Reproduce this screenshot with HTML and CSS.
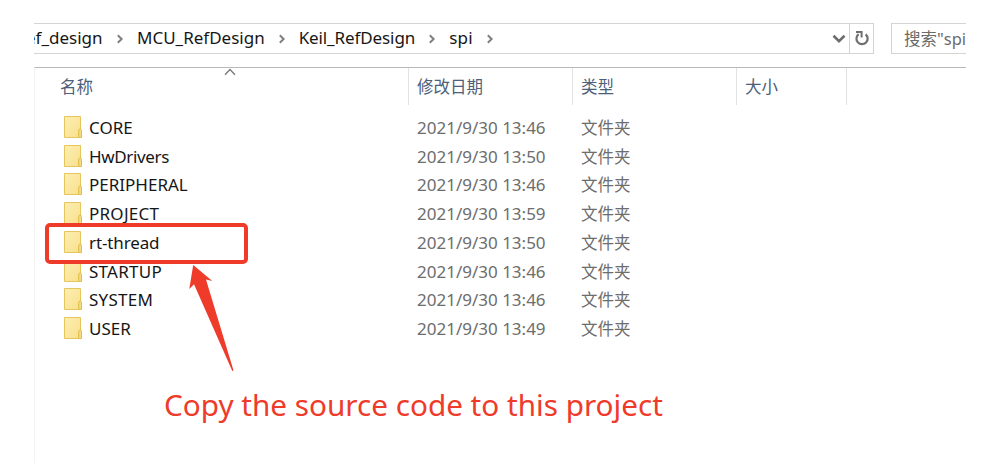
FILE: index.html
```html
<!DOCTYPE html>
<html lang="zh-CN">
<head>
<meta charset="utf-8">
<title>spi</title>
<link rel="stylesheet" href="styles.css">
</head>
<body>
<svg class="defs" width="0" height="0">
  <defs>
    <linearGradient id="paper" x1="0" y1="0" x2="1" y2="1"><stop offset="0" stop-color="#fdeeb2"/><stop offset="1" stop-color="#f8e08c"/></linearGradient>
    <symbol id="folder" viewBox="0 0 18 22">
      <path d="M.5.5h16v13.2l-1.5 1.1v6.7H.5z" fill="url(#paper)" stroke="#e4c65c"/>
      <path d="M14.7 21.5v-7q0-1.5 1.4-1.5t1.4 1.5v7z" fill="#f6dc80" stroke="#dfbd4c"/>
    </symbol>
    <symbol id="chevron" viewBox="0 0 8 10"><path d="M1.8 1.3 5.6 5 1.8 8.7" fill="none" stroke="#808080" stroke-width="2"/></symbol>
  </defs>
</svg>
<main class="window">
  <header class="toolbar">
    <nav class="address">
      <span class="crumb first">ef_design</span>
      <svg class="sep"><use href="#chevron"/></svg>
      <span class="crumb">MCU_RefDesign</span>
      <svg class="sep"><use href="#chevron"/></svg>
      <span class="crumb keil">Keil_RefDesign</span>
      <svg class="sep"><use href="#chevron"/></svg>
      <span class="crumb spi">spi</span>
      <svg class="sep"><use href="#chevron"/></svg>
      <svg class="drop" viewBox="0 0 14 10"><path d="M1.5 1.8 7 7.2l5.5-5.4" fill="none" stroke="#6c6c6c" stroke-width="2.6"/></svg>
      <span class="refresh"><svg width="16" height="17" viewBox="0 0 16 17"><path d="M4.6 4.2A5.6 5.6 0 1 0 11.6 4.3" fill="none" stroke="#707070" stroke-width="2.2"/><path d="M2 2h5.6v5.6" fill="none" stroke="#707070" stroke-width="2"/></svg></span>
    </nav>
    <div class="search">搜索"spi"</div>
  </header>
  <section class="files">
    <div class="head">
      <span>名称<svg class="sort" viewBox="0 0 12 8"><path d="M1 6.7 6 1.5l5 5.2" fill="none" stroke="#777" stroke-width="1.3"/></svg></span><span>修改日期</span><span>类型</span><span>大小</span>
    </div>
    <ul class="rows">
      <li><span class="name"><svg><use href="#folder"/></svg>CORE</span><span>2021/9/30 13:46</span><span class="type">文件夹</span></li>
      <li><span class="name tighter"><svg><use href="#folder"/></svg>HwDrivers</span><span>2021/9/30 13:50</span><span class="type">文件夹</span></li>
      <li><span class="name"><svg><use href="#folder"/></svg>PERIPHERAL</span><span>2021/9/30 13:46</span><span class="type">文件夹</span></li>
      <li><span class="name loose"><svg><use href="#folder"/></svg>PROJECT</span><span>2021/9/30 13:59</span><span class="type">文件夹</span></li>
      <li><span class="name tight"><svg><use href="#folder"/></svg>rt-thread</span><span>2021/9/30 13:50</span><span class="type">文件夹</span></li>
      <li><span class="name loose"><svg><use href="#folder"/></svg>STARTUP</span><span>2021/9/30 13:46</span><span class="type">文件夹</span></li>
      <li><span class="name loose"><svg><use href="#folder"/></svg>SYSTEM</span><span>2021/9/30 13:46</span><span class="type">文件夹</span></li>
      <li><span class="name"><svg><use href="#folder"/></svg>USER</span><span>2021/9/30 13:49</span><span class="type">文件夹</span></li>
    </ul>
  </section>
</main>
<div class="highlight"></div>
<svg class="arrow" viewBox="0 0 46 108"><path d="M5.2 1 24.3 17 18 15.6 45.5 106.5 44.3 107 6 20.3 1.3 25z" fill="#ee3b2a"/></svg>
<p class="note">Copy the source code to this project</p>
</body>
</html>
```
FILE: styles.css
```css
* { box-sizing: border-box; }
body {
  margin: 0;
  width: 998px;
  height: 470px;
  overflow: hidden;
  background: #fff;
  color: #161616;
  font: 17px/24px "Noto Sans", "Noto Sans CJK SC", sans-serif;
}
.defs { position: absolute; }
.window { width: 932px; margin-left: 34px; padding-top: 23px; overflow: hidden; }
.toolbar { display: flex; height: 31px; }
.address {
  display: flex;
  flex: none;
  align-items: center;
  width: 840px;
  border: 1px solid #d4d4d4;
  border-left: 0;
  overflow: hidden;
}
.crumb { white-space: nowrap; margin-top: -2px; }
.first { margin-left: -8px; width: 77px; }
.sep { width: 8px; height: 10px; flex: none; margin: 1px 13px 0 13px; }
.keil { letter-spacing: -0.1px; }
.spi { letter-spacing: 0.3px; }
.drop { width: 14px; height: 10px; margin: 1px 3px 0 auto; }
.refresh { display: flex; align-items: center; justify-content: center; width: 24px; height: 100%; border-left: 1px solid #d4d4d4; }
.search {
  width: 100px;
  flex: none;
  margin-left: 17px;
  padding: 3px 0 0 12px;
  border: 1px solid #d4d4d4;
  color: #6b6b6b;
  white-space: nowrap;
  font-size: 16.5px;
}
.files { margin-top: 13px; height: 396px; border-top: 1.5px solid #b9b9b9; border-left: 1px solid #f3f3f3; }
.head { display: grid; grid-template-columns: 374px 164px 164px 110px; height: 37px; color: #4c607a; font-size: 16.5px; }
.head span { position: relative; border-right: 1px solid #e2e2e2; padding: 7px 0 0 8px; }
.head span:first-child { padding-left: 25px; }
.sort { position: absolute; left: 189px; top: 0; width: 12px; height: 8px; }
.rows { list-style: none; margin: 8.6px 0 0; padding: 0; }
.rows li { display: grid; grid-template-columns: 382px 164px 164px; align-items: center; height: 28.72px; color: #6d6d6d; }
.name { display: flex; align-items: center; color: #161616; }
.name svg { width: 18px; height: 22px; margin: -2px 7px 0 29px; }
.tight { letter-spacing: -0.12px; }
.tighter { letter-spacing: -0.35px; }
.loose { letter-spacing: 0.25px; }
.type { font-size: 16.5px; }
.highlight { position: absolute; left: 45px; top: 223px; width: 203px; height: 41px; border: 4px solid #ee3b2a; border-radius: 5px; }
.arrow { position: absolute; left: 188px; top: 264px; width: 46px; height: 108px; }
.note { position: absolute; left: 164px; top: 385px; margin: 0; color: #ee3b2a; font-size: 29.7px; line-height: 40px; white-space: nowrap; }
```
